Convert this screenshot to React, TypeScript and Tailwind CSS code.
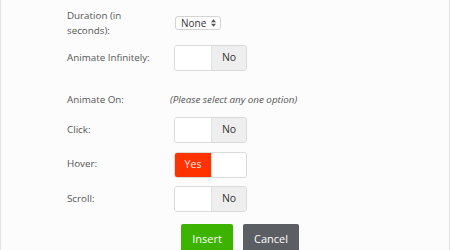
import React from "react";

function Toggle({ on }: { on: boolean }) {
  return (
    <div className="ml-[4px] flex h-[26px] w-[73px] overflow-hidden rounded-[3px] border border-[#dadada] text-[10.5px]">
      {on ? (
        <>
          <div className="flex w-[36px] items-center justify-center bg-[#ff3300] text-[#ffe9e3]">Yes</div>
          <div className="flex-1 border-l border-[#dadada] bg-white" />
        </>
      ) : (
        <>
          <div className="w-[36px] bg-white" />
          <div className="flex flex-1 items-center justify-center border-l border-[#e2e2e2] bg-[#eeeeee] text-[#333]">No</div>
        </>
      )}
    </div>
  );
}

function Row({ label, children }: { label: string; children: React.ReactNode }) {
  return (
    <div className="flex h-[26px] items-center">
      <div className="w-[103px]">{label}</div>
      {children}
    </div>
  );
}

export default function App() {
  return (
    <div
      className="h-[250px] w-[450px] overflow-hidden border-x border-[#e2e2e2] bg-[#fcfcfc] text-[9.8px] text-[#555]"
      style={{ fontFamily: '"Open Sans", sans-serif' }}
    >
      <div className="flex flex-col pl-[66px] pt-[8px]">
        <div className="flex items-center">
          <div className="w-[103px] leading-[15px]">
            Duration (in
            <br />
            seconds):
          </div>
          <div className="ml-[5px] flex h-[14px] w-[46px] items-center justify-between rounded-[3px] border border-[#d4d4d4] bg-white pl-[5px] pr-[4px] text-[10px] text-[#333]">
            <span>None</span>
            <svg width="5" height="8" viewBox="0 0 6 9">
              <path d="M3 0 L6 3.5 L0 3.5 Z" fill="#555" />
              <path d="M3 9 L6 5.5 L0 5.5 Z" fill="#555" />
            </svg>
          </div>
        </div>
        <div className="mt-[7px]">
          <Row label="Animate Infinitely:">
            <Toggle on={false} />
          </Row>
        </div>
        <div className="mt-[22px] flex h-[15px] items-center">
          <div className="w-[103px]">Animate On:</div>
          <div className="italic">(Please select any one option)</div>
        </div>
        <div className="mt-[9px] flex flex-col gap-[8.5px]">
          <Row label="Click:">
            <Toggle on={false} />
          </Row>
          <Row label="Hover:">
            <Toggle on={true} />
          </Row>
          <Row label="Scroll:">
            <Toggle on={false} />
          </Row>
        </div>
        <div className="ml-[114px] mt-[12px] flex gap-[10px] text-[11px]">
          <div className="flex h-[30px] w-[52px] items-center justify-center rounded-[2px] bg-[#3cb300] text-white">Insert</div>
          <div className="flex h-[30px] w-[56px] items-center justify-center rounded-[2px] bg-[#5b5e62] text-white">Cancel</div>
        </div>
      </div>
    </div>
  );
}
